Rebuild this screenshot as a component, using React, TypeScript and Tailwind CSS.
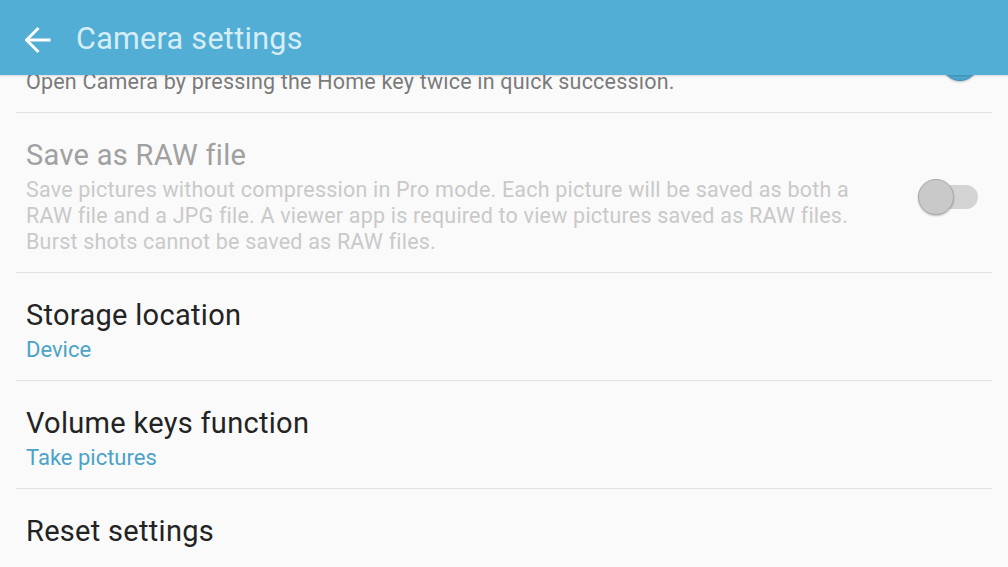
import React from 'react';

type Row = {
  title: string;
  desc?: string;
  value?: string;
  toggle?: 'on' | 'off';
  disabled?: boolean;
};

const ROWS: Row[] = [
  { title: 'Quick launch', desc: 'Open Camera by pressing the Home key twice in quick succession.', toggle: 'on' },
  {
    title: 'Save as RAW file',
    desc: 'Save pictures without compression in Pro mode. Each picture will be saved as both a RAW file and a JPG file. A viewer app is required to view pictures saved as RAW files. Burst shots cannot be saved as RAW files.',
    toggle: 'off',
    disabled: true,
  },
  { title: 'Storage location', value: 'Device' },
  { title: 'Volume keys function', value: 'Take pictures' },
  { title: 'Reset settings' },
];

function Toggle({ on }: { on: boolean }) {
  return (
    <div className="relative w-[60px] h-[36px] flex-shrink-0">
      <div
        className={`absolute left-[6px] right-0 top-[6px] h-[24px] rounded-full ${
          on ? 'bg-[#a9d6ea]' : 'bg-[#d4d4d4]'
        }`}
      />
      <div
        className={`absolute top-0 w-[36px] h-[36px] rounded-full border shadow-[0_1px_2px_rgba(0,0,0,0.25)] ${
          on ? 'right-0 bg-[#4aa6cd] border-[#3f93b8]' : 'left-0 bg-[#c9c9c9] border-[#a9a9a9]'
        }`}
      />
    </div>
  );
}

export default function App() {
  return (
    <div className="w-[1008px] h-[567px] flex flex-col bg-[#fafafa] overflow-hidden font-['Roboto',sans-serif]">
      {/* header */}
      <div className="relative z-10 h-[75px] flex-shrink-0 flex items-center pt-[4px] bg-[#52aed4] shadow-[0_1px_2px_rgba(0,0,0,0.15)]">
        <svg width="26" height="28" viewBox="0 0 26 28" className="ml-[25px]" fill="none">
          <path d="M1.5 14H25.5M13.5 2L1.5 14L13.5 26" stroke="#ffffff" strokeWidth="3" />
        </svg>
        <h1 className="ml-[25px] text-[30.5px] leading-none text-[#d5edf7] tracking-[0.3px]">Camera settings</h1>
      </div>

      {/* list, scrolled so the first row sits under the header */}
      <div className="flex-1 overflow-hidden">
        <div className="-mt-[70px]">
          {ROWS.map((row, i) => (
            <div
              key={row.title}
              className={`mx-4 flex items-center pl-[10px] pr-[14px] pt-[26px] pb-[17px] ${
                i > 0 ? 'border-t border-[#e1e1e1]' : ''
              }`}
            >
              <div className="flex-1">
                <p
                  className={`text-[29px] leading-[32px] mb-[6px] tracking-[0.3px] ${
                    row.disabled ? 'text-[#a0a0a0]' : 'text-[#232323]'
                  }`}
                >
                  {row.title}
                </p>
                {row.desc && (
                  <p
                    className={`w-[860px] text-[21.5px] leading-[26px] tracking-[0.2px] ${
                      row.disabled ? 'text-[#c9c9c9]' : 'text-[#7a7a7a]'
                    }`}
                  >
                    {row.desc}
                  </p>
                )}
                {row.value && <p className="text-[22px] leading-[26px] text-[#4aa3c8]">{row.value}</p>}
              </div>
              {row.toggle && <Toggle on={row.toggle === 'on'} />}
            </div>
          ))}
        </div>
      </div>
    </div>
  );
}
